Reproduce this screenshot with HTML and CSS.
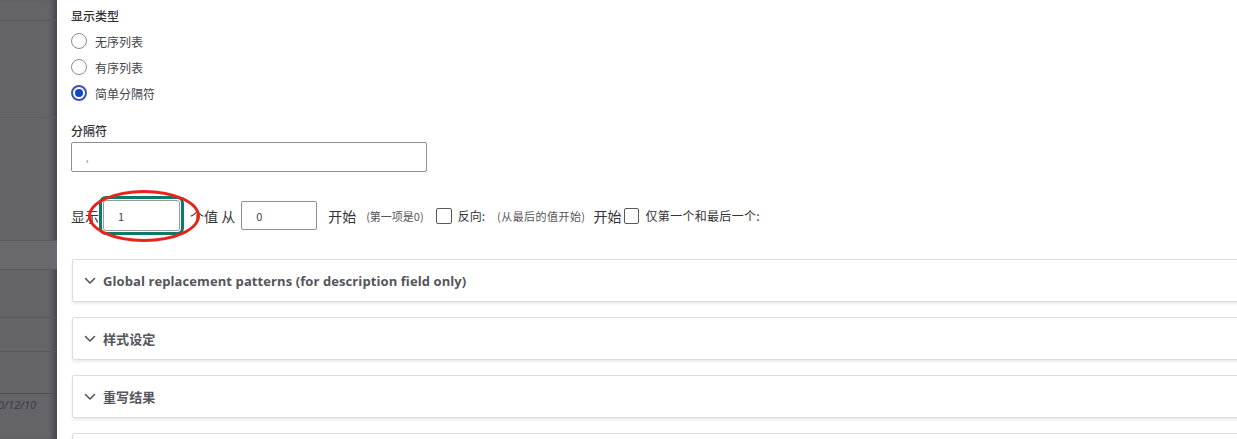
FILE: index.html
```html
<!DOCTYPE html>
<html lang="zh">
<head>
<meta charset="utf-8">
<title>显示类型</title>
<link rel="stylesheet" href="styles.css">
</head>
<body>
<div class="page">
  <aside class="backdrop">
    <div class="bg-row r1"></div>
    <div class="bg-row r2"></div>
    <div class="bg-row r3"></div>
    <div class="bg-row r4 light"></div>
    <div class="bg-row r5"></div>
    <div class="bg-row r6"></div>
    <div class="bg-row r7"></div>
    <div class="bg-row r8"><span class="date">0/12/10</span></div>
  </aside>
  <main class="panel">
    <div class="field-label">显示类型</div>
    <div class="radios">
      <label class="radio"><span class="radio-circle"></span><span>无序列表</span></label>
      <label class="radio"><span class="radio-circle"></span><span>有序列表</span></label>
      <label class="radio"><span class="radio-circle checked"></span><span>简单分隔符</span></label>
    </div>

    <div class="field-label sep-label">分隔符</div>
    <div class="text-input wide">,</div>

    <div class="inline-row">
      <span class="big">显示</span>
      <span class="focus-wrap">
        <span class="text-input num focused">1</span>
        <span class="annotation"></span>
      </span>
      <span class="big m-after-1">个值 从</span>
      <span class="text-input num zero">0</span>
      <span class="big m-start">开始</span>
      <span class="small m-hint">(第一项是0)</span>
      <span class="checkbox m-cb1"></span>
      <span class="mid m-rev">反向:</span>
      <span class="small m-hint2">(从最后的值开始)</span>
      <span class="big m-start2">开始</span>
      <span class="checkbox m-cb2"></span>
      <span class="mid m-only">仅第一个和最后一个:</span>
    </div>

    <div class="accordions">
      <div class="card"><svg class="chev" viewBox="0 0 12 8" width="12" height="8"><path d="M1.5 1.5 L6 6 L10.5 1.5" /></svg><span class="card-title">Global replacement patterns (for description field only)</span></div>
      <div class="card"><svg class="chev" viewBox="0 0 12 8" width="12" height="8"><path d="M1.5 1.5 L6 6 L10.5 1.5" /></svg><span class="card-title">样式设定</span></div>
      <div class="card"><svg class="chev" viewBox="0 0 12 8" width="12" height="8"><path d="M1.5 1.5 L6 6 L10.5 1.5" /></svg><span class="card-title">重写结果</span></div>
      <div class="card"></div>
    </div>
  </main>
</div>
</body>
</html>
```

FILE: styles.css
```css
html, body {
  margin: 0;
  padding: 0;
  width: 1237px;
  height: 439px;
  overflow: hidden;
  background: #ffffff;
  font-family: "Open Sans", "Noto Sans CJK SC", sans-serif;
  color: #333338;
}

.page {
  display: flex;
  height: 439px;
  overflow: hidden;
}

.backdrop {
  flex: none;
  width: 57px;
  background: #646469;
  display: flex;
  flex-direction: column;
  box-shadow: inset -7px 0 6px -4px rgba(0, 0, 0, 0.35);
}

.bg-row {
  border-bottom: 1px solid #58585d;
  box-sizing: border-box;
}
.r1 { height: 21px; }
.r2 { height: 97px; border-bottom-color: #5e5e63; }
.r3 { height: 123px; }
.r4 { height: 29px; }
.r4.light { background: #68686d; }
.r5 { height: 48px; }
.r6 { height: 34px; }
.r7 { height: 42px; border-bottom-color: #4e4e53; }
.r8 { flex: 1; border-bottom: none; padding-top: 3px; }
.date {
  display: block;
  margin-left: -2px;
  font-size: 11px;
  font-style: italic;
  color: #3c3c42;
  font-family: "Open Sans", sans-serif;
}

.panel {
  flex: 1;
  min-width: 0;
  padding: 8px 0 0 14px;
}

.field-label {
  font-size: 12px;
  line-height: 16px;
  font-weight: 500;
  color: #2f2f34;
  font-family: "Noto Sans CJK SC", sans-serif;
}

.radios {
  margin-top: 4px;
  display: flex;
  flex-direction: column;
}

.radio {
  height: 26px;
  display: flex;
  align-items: center;
  font-size: 12px;
  color: #444449;
  font-family: "Noto Sans CJK SC", sans-serif;
}

.radio-circle {
  width: 16px;
  height: 16px;
  box-sizing: border-box;
  border: 1px solid #8c8c90;
  border-radius: 50%;
  margin-right: 8px;
  background: #fff;
  position: relative;
}

.radio-circle.checked {
  border: 2px solid #4451a6;
}
.radio-circle.checked::after {
  content: "";
  position: absolute;
  left: 2px;
  top: 2px;
  width: 8px;
  height: 8px;
  border-radius: 50%;
  background: #0b48d0;
}

.sep-label {
  margin-top: 17px;
}

.text-input {
  box-sizing: border-box;
  border: 1px solid #8e8e92;
  border-radius: 2px;
  background: #fff;
  font-size: 11px;
  color: #555;
  display: flex;
  align-items: center;
  flex: none;
}

.text-input.wide {
  margin-top: 3px;
  width: 356px;
  height: 30px;
  padding-left: 14px;
  color: #888;
}

.inline-row {
  margin-top: 28px;
  height: 31px;
  display: flex;
  align-items: center;
  white-space: nowrap;
  font-family: "Noto Sans CJK SC", sans-serif;
}

.big { font-size: 14px; color: #333338; }
.mid { font-size: 12px; color: #333338; }
.small { font-size: 11px; color: #555559; }

.focus-wrap {
  position: relative;
  margin-left: 4px;
  display: flex;
}

.text-input.num {
  width: 77px;
  height: 31px;
  padding-left: 14px;
  font-size: 11px;
  color: #444;
}

.text-input.focused {
  border-color: #9a9a9e;
  box-shadow: 0 0 0 1px #fff, 0 0 0 4px #0b7a69;
  border-radius: 3px;
}

.annotation {
  position: absolute;
  left: -15px;
  top: -10px;
  width: 112px;
  height: 52px;
  box-sizing: border-box;
  border: 3px solid #e8231b;
  border-radius: 50%;
  pointer-events: none;
}

.m-after-1 { margin-left: 10px; }
.text-input.zero {
  margin-left: 6px;
  width: 76px;
  height: 29px;
}
.m-start { margin-left: 11px; }
.m-hint { margin-left: 10px; }
.checkbox {
  width: 16px;
  height: 16px;
  box-sizing: border-box;
  border: 1px solid #5a5a5e;
  border-radius: 2px;
  background: #fff;
  flex: none;
}
.m-cb1 { margin-left: 12px; }
.m-rev { margin-left: 6px; }
.m-hint2 { margin-left: 12px; letter-spacing: 0.45px; }
.m-start2 { margin-left: 8px; }
.m-cb2 { margin-left: 2px; width: 15px; }
.m-only { margin-left: 7px; letter-spacing: 0.3px; }

.accordions {
  margin-top: 28px;
  margin-right: -30px;
  padding-left: 1px;
  display: flex;
  flex-direction: column;
  gap: 15px;
}

.card {
  height: 43px;
  box-sizing: border-box;
  border: 1px solid #dcdcde;
  border-radius: 2px;
  background: #fff;
  box-shadow: 0 2px 3px rgba(0, 0, 0, 0.08);
  display: flex;
  align-items: center;
  padding-left: 11px;
  flex: none;
}

.chev {
  flex: none;
  fill: none;
  stroke: #55555c;
  stroke-width: 1.6;
  stroke-linecap: round;
  stroke-linejoin: round;
  margin-right: 7px;
}

.card-title {
  font-size: 13px;
  font-weight: 700;
  letter-spacing: 0.09px;
  color: #55555c;
  font-family: "Open Sans", "Noto Sans CJK SC", sans-serif;
}
```
